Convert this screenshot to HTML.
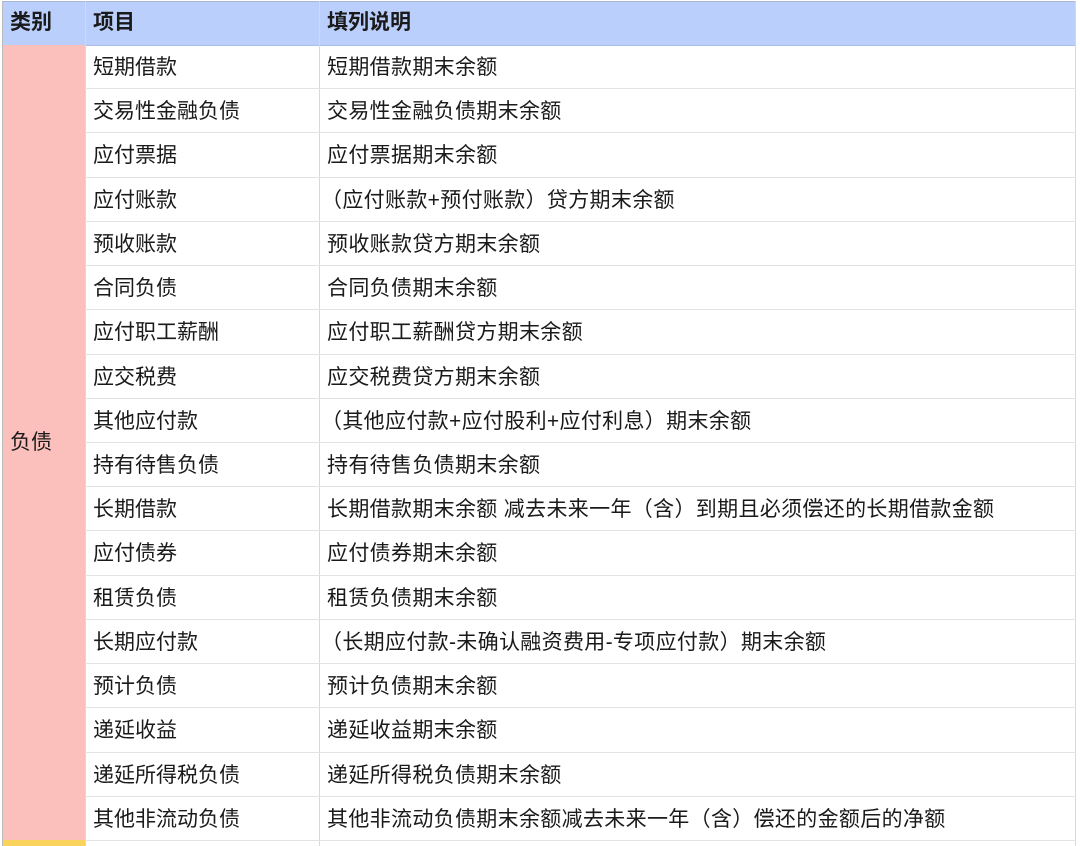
<!DOCTYPE html>
<html><head><meta charset="utf-8"><style>
body{margin:0;width:1080px;height:846px;overflow:hidden;background:#fff;font-family:"Liberation Sans","Noto Sans CJK SC",sans-serif;color:#1a1a1a;position:relative}
.h{position:absolute;top:1px;left:3px;width:1073px;height:43px;background:#bbcffc;border-top:1px solid #a9b6d6;border-bottom:1px solid #a8bde8}
.vl{position:absolute;top:1px;bottom:0;width:1px;background:#d8d8d8}
.t{position:absolute;font-size:21px;line-height:44px;white-space:nowrap}
.c{letter-spacing:0.33px}
.b{font-weight:bold}
.r{position:absolute;left:85px;width:991px;height:1px;background:#e3e3e3}
</style></head><body>
<div class="h"></div>
<div style="position:absolute;left:3px;top:45px;width:82px;height:795px;background:#fbbfbc"></div>
<div style="position:absolute;left:3px;top:840px;width:82px;height:6px;background:#f9d35c"></div>
<div class="vl" style="left:2px;background:#bbb"></div>
<div class="vl" style="left:85px"></div>
<div class="vl" style="left:319px"></div>
<div class="vl" style="left:1075px"></div>
<div class="t b" style="left:10px;top:1px">类别</div>
<div class="t b" style="left:93px;top:1px">项目</div>
<div class="t b" style="left:327px;top:1px">填列说明</div>
<div class="t" style="left:10px;top:421px">负债</div>
<div id="rows"></div>
<script>
var d=[["短期借款","短期借款期末余额"],["交易性金融负债","交易性金融负债期末余额"],["应付票据","应付票据期末余额"],["应付账款","（应付账款+预付账款）贷方期末余额"],["预收账款","预收账款贷方期末余额"],["合同负债","合同负债期末余额"],["应付职工薪酬","应付职工薪酬贷方期末余额"],["应交税费","应交税费贷方期末余额"],["其他应付款","（其他应付款+应付股利+应付利息）期末余额"],["持有待售负债","持有待售负债期末余额"],["长期借款","长期借款期末余额 减去未来一年（含）到期且必须偿还的长期借款金额"],["应付债券","应付债券期末余额"],["租赁负债","租赁负债期末余额"],["长期应付款","（长期应付款-未确认融资费用-专项应付款）期末余额"],["预计负债","预计负债期末余额"],["递延收益","递延收益期末余额"],["递延所得税负债","递延所得税负债期末余额"],["其他非流动负债","其他非流动负债期末余额减去未来一年（含）偿还的金额后的净额"]];
var h="";for(var i=0;i<d.length;i++){var y=Math.round(44+i*44.22);
if(i>0)h+='<div class="r" style="top:'+y+'px"></div>';
var s=d[i][1].charAt(0)=="（"?"left:321px":"left:327px";
h+='<div class="t" style="left:93px;top:'+(y+2)+'px">'+d[i][0]+'</div><div class="t c" style="'+s+';top:'+(y+2)+'px">'+d[i][1]+'</div>';}
h+='<div class="r" style="top:840px"></div>';
document.getElementById("rows").innerHTML=h;
</script>
</body></html>
